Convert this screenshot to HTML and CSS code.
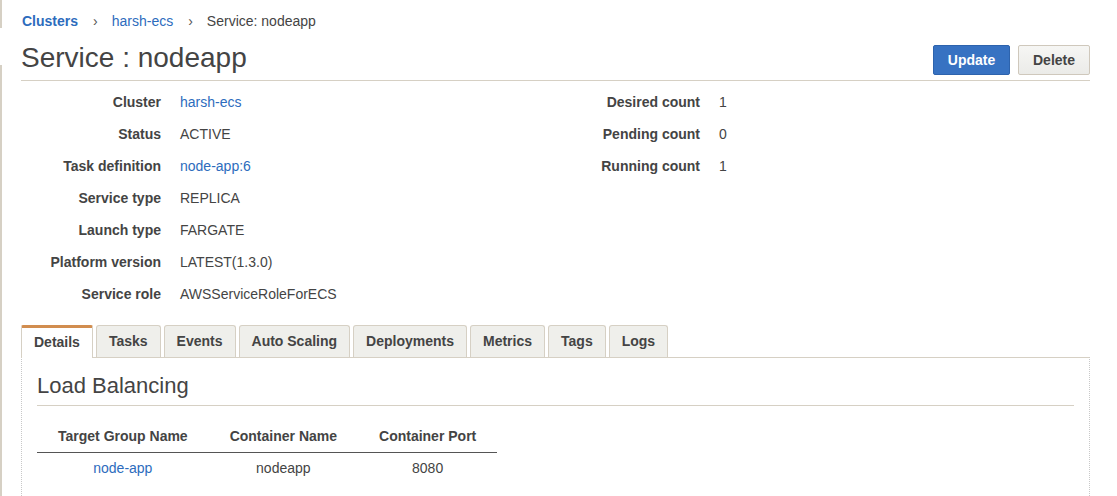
FILE: index.html
```html
<!DOCTYPE html>
<html lang="en">
<head>
<meta charset="utf-8">
<title>Service : nodeapp</title>
<link rel="stylesheet" href="styles.css">
</head>
<body>
<div class="page">
  <nav class="crumbs">
    <a class="crumb-root" href="#">Clusters</a>
    <span class="sep">›</span>
    <a href="#">harsh-ecs</a>
    <span class="sep">›</span>
    <span class="crumb-current">Service: nodeapp</span>
  </nav>

  <header class="head">
    <h1 class="title">Service : nodeapp</h1>
    <div class="actions">
      <button class="btn btn-primary">Update</button>
      <button class="btn btn-default">Delete</button>
    </div>
  </header>

  <section class="summary">
    <dl class="kv kv-left">
      <dt>Cluster</dt><dd><a href="#">harsh-ecs</a></dd>
      <dt>Status</dt><dd>ACTIVE</dd>
      <dt>Task definition</dt><dd><a href="#">node-app:6</a></dd>
      <dt>Service type</dt><dd>REPLICA</dd>
      <dt>Launch type</dt><dd>FARGATE</dd>
      <dt>Platform version</dt><dd>LATEST(1.3.0)</dd>
      <dt>Service role</dt><dd>AWSServiceRoleForECS</dd>
    </dl>
    <dl class="kv kv-right">
      <dt>Desired count</dt><dd>1</dd>
      <dt>Pending count</dt><dd>0</dd>
      <dt>Running count</dt><dd>1</dd>
    </dl>
  </section>

  <div class="tabs">
    <div class="tab active">Details</div>
    <div class="tab">Tasks</div>
    <div class="tab">Events</div>
    <div class="tab">Auto Scaling</div>
    <div class="tab">Deployments</div>
    <div class="tab">Metrics</div>
    <div class="tab">Tags</div>
    <div class="tab">Logs</div>
  </div>

  <div class="panel">
    <h2 class="panel-title">Load Balancing</h2>
    <table class="lb">
      <thead>
        <tr><th>Target Group Name</th><th>Container Name</th><th>Container Port</th></tr>
      </thead>
      <tbody>
        <tr><td><a href="#">node-app</a></td><td>nodeapp</td><td>8080</td></tr>
      </tbody>
    </table>
  </div>
</div>
</body>
</html>
```

FILE: styles.css
```css
html, body {
  margin: 0;
  padding: 0;
  background: #fff;
}
body {
  font-family: "Liberation Sans", Arial, sans-serif;
  font-size: 14px;
  color: #444;
  background-image: linear-gradient(to bottom, #d6d0c4 0, #d6d0c4 28px, transparent 28px, transparent 65px, #d6d0c4 65px);
  background-repeat: no-repeat;
  background-size: 2px 100%;
  background-position: 0 0;
  min-height: 496px;
  overflow: hidden;
}
a {
  color: #2d6cbd;
  text-decoration: none;
}
.page {
  padding: 0 27px 0 21px;
}

/* breadcrumbs */
.crumbs {
  padding-top: 11px;
  height: 20px;
  line-height: 20px;
  display: flex;
  align-items: center;
  padding-left: 1px;
}
.crumb-root {
  font-weight: bold;
}
.sep {
  color: #555;
  margin: 0 14px 0 15px;
  font-size: 14px;
}
.crumb-current {
  color: #444;
}

/* header */
.head {
  margin-top: 11px;
  display: flex;
  align-items: flex-end;
  justify-content: space-between;
  padding-bottom: 5px;
  border-bottom: 1px solid #d6d0c4;
}
.title {
  margin: 0 0 1px 0;
  font-size: 28px;
  line-height: 32px;
  font-weight: normal;
  color: #444;
}
.actions {
  display: flex;
  gap: 8px;
}
.btn {
  height: 30px;
  font-family: "Liberation Sans", Arial, sans-serif;
  font-size: 14px;
  font-weight: bold;
  border-radius: 2px;
  padding: 0;
  cursor: pointer;
}
.btn-primary {
  width: 77px;
  background: #3772c2;
  border: 1px solid #2d63ad;
  color: #fff;
}
.btn-default {
  width: 72px;
  background: linear-gradient(#f6f6f4, #ebebe8);
  border: 1px solid #cfc8bc;
  color: #444;
}

/* summary */
.summary {
  display: grid;
  grid-template-columns: 540px 1fr;
  padding-top: 5px;
}
.kv {
  margin: 0;
  display: grid;
  grid-auto-rows: 32px;
  align-items: center;
  column-gap: 19px;
}
.kv-left {
  grid-template-columns: 140px 1fr;
}
.kv-right {
  grid-template-columns: 139px 1fr;
}
.kv dt {
  font-weight: bold;
  text-align: right;
}
.kv dd {
  margin: 0;
}

/* tabs */
.tabs {
  margin-top: 15px;
  display: flex;
  gap: 3px;
  height: 32px;
}
.tab {
  box-sizing: border-box;
  height: 32px;
  padding: 0 12px;
  line-height: 31px;
  font-weight: bold;
  background: #efefeb;
  border: 1px solid #d6d0c4;
  border-bottom: none;
  border-radius: 3px 3px 0 0;
}
.tab.active {
  background: #fff;
  border-top: 3px solid #d18d4f;
  line-height: 29px;
  height: 33px;
  position: relative;
  z-index: 1;
  border-radius: 2px 2px 0 0;
}

/* panel */
.panel {
  border-top: 1px solid #d6d0c4;
  border-left: 1px dotted #c8c8c8;
  border-right: 1px dotted #c8c8c8;
  padding: 0 15px 20px;
  min-height: 140px;
}
.panel-title {
  margin: 15px 0 0;
  font-size: 22px;
  line-height: 26px;
  font-weight: normal;
  color: #444;
  padding-bottom: 6px;
  border-bottom: 1px solid #d6d0c4;
}
.lb {
  margin-top: 15px;
  border-collapse: collapse;
}
.lb th {
  font-weight: bold;
  height: 30px;
  padding: 0 21px 1px;
  border-bottom: 1px solid #555;
  text-align: center;
}
.lb td {
  padding: 0 21px;
  height: 30px;
  text-align: center;
}
```
